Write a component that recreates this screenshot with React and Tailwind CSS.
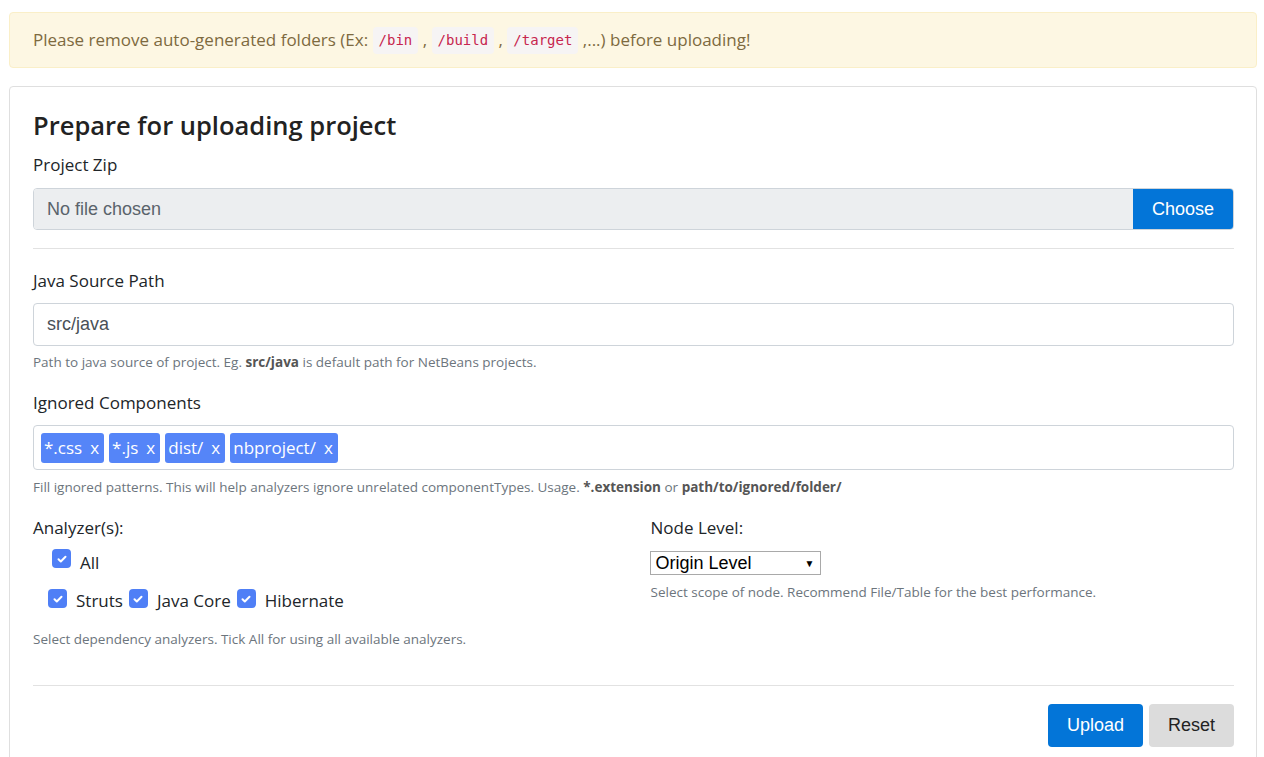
const tags = ['*.css', '*.js', 'dist/', 'nbproject/'];

const Check = () => (
    <span className="inline-flex h-[19px] w-[19px] items-center justify-center rounded-[4px] bg-[#4f7ff6]">
        <svg width="12" height="12" viewBox="0 0 12 12" fill="none">
            <path d="M2.5 6.3l2.3 2.2 4.7-4.7" stroke="white" strokeWidth="2" strokeLinecap="round" strokeLinejoin="round" />
        </svg>
    </span>
);

const Code = ({ children }) => (
    <code className="rounded-[4px] bg-[#f6f4f4] px-[6px] py-[3px] text-[14px] text-[#c7254e]" style={{ fontFamily: '"DejaVu Sans Mono", monospace' }}>
        {children}
    </code>
);

export default function App() {
    return (
        <div className="min-h-screen bg-white pt-[12px] pr-[7px] pl-[9px] text-[#212529]" style={{ fontFamily: '"Open Sans", "Noto Sans", sans-serif' }}>
            <div className="flex h-[56px] items-center rounded-[4px] border border-[#faefc8] bg-[#fdf7e3] px-[23px] text-[17px] text-[#7d6a3f]">
                <span>Please remove auto-generated folders (Ex:&nbsp;</span>
                <Code>/bin</Code>
                <span>&nbsp;,&nbsp;</span>
                <Code>/build</Code>
                <span>&nbsp;,&nbsp;</span>
                <Code>/target</Code>
                <span>&nbsp;,...) before uploading!</span>
            </div>

            <div className="mt-[18px] rounded-t-[4px] border border-[#dfdfdf] pt-[20px] pr-[22px] pb-[10px] pl-[23px]">
                <h3 className="text-[25.5px] font-semibold leading-[36px] text-[#222]">Prepare for uploading project</h3>
                <div className="mt-[10px] text-[17px] leading-[24px]">Project Zip</div>
                <div className="mt-[11px] flex h-[42px] overflow-hidden rounded-[4px] border border-[#ced4da]" style={{ fontFamily: '"Liberation Sans", Arial, sans-serif' }}>
                    <div className="flex flex-1 items-center bg-[#eceef0] px-[13px] text-[18px] text-[#5a636b]">No file chosen</div>
                    <div className="flex w-[100px] items-center justify-center bg-[#0375d8] text-[18px] text-white">Choose</div>
                </div>
                <div className="mt-[18px] border-t border-[#e2e2e2]" />

                <div className="mt-[20px] text-[17px] leading-[24px]">Java Source Path</div>
                <div className="mt-[10px] flex h-[43px] items-center rounded-[4px] border border-[#ced4da] px-[13px] text-[18px] text-[#495057]" style={{ fontFamily: '"Liberation Sans", Arial, sans-serif' }}>
                    src/java
                </div>
                <div className="mt-[6px] text-[13.5px] leading-[20px] text-[#6c757d]">
                    Path to java source of project. Eg. <b className="text-[#555]">src/java</b> is default path for NetBeans projects.
                </div>

                <div className="mt-[19px] text-[17px] leading-[24px]">Ignored Components</div>
                <div className="mt-[10px] flex h-[45px] items-center gap-[5px] rounded-[4px] border border-[#ced4da] px-[7px]">
                    {tags.map((t) => (
                        <span key={t} className="flex h-[30px] items-center gap-[8px] rounded-[3px] bg-[#5585f8] pr-[5px] pl-[3px] text-[17px] text-white">
                            <span>{t}</span>
                            <span>x</span>
                        </span>
                    ))}
                </div>
                <div className="mt-[7px] text-[13.5px] leading-[20px] text-[#6c757d]">
                    Fill ignored patterns. This will help analyzers ignore unrelated componentTypes. Usage. <b className="text-[#555]">*.extension</b> or <b className="text-[#555]">path/to/ignored/folder/</b>
                </div>

                <div className="mt-[19px] grid grid-cols-2 gap-[34px]">
                    <div>
                        <div className="text-[17px] leading-[24px]">Analyzer(s):</div>
                        <div className="mt-[10px] flex items-center pl-[19px]">
                            <span className="-mt-[8px]"><Check /></span>
                            <span className="ml-[9px] text-[17px]">All</span>
                        </div>
                        <div className="mt-[12px] flex items-center pl-[15px] text-[17px]">
                            <span className="-mt-[4px]"><Check /></span>
                            <span className="ml-[9px]">Struts</span>
                            <span className="-mt-[4px] ml-[6px]"><Check /></span>
                            <span className="ml-[9px]">Java Core</span>
                            <span className="-mt-[4px] ml-[6px]"><Check /></span>
                            <span className="ml-[9px]">Hibernate</span>
                        </div>
                        <div className="mt-[16px] text-[13.5px] leading-[20px] text-[#6c757d]">Select dependency analyzers. Tick All for using all available analyzers.</div>
                    </div>
                    <div>
                        <div className="text-[17px] leading-[24px]">Node Level:</div>
                        <div className="-ml-[1px] mt-[11px] flex h-[24px] w-[171px] items-center justify-between border border-[#a9a9a9] px-[5px] text-[18px] text-black" style={{ fontFamily: '"Liberation Sans", Arial, sans-serif' }}>
                            <span>Origin Level</span>
                            <span className="text-[10px]">▼</span>
                        </div>
                        <div className="mt-[7px] text-[13.5px] leading-[20px] text-[#6c757d]">Select scope of node. Recommend File/Table for the best performance.</div>
                    </div>
                </div>

                <div className="mt-[36px] border-t border-[#e2e2e2]" />
                <div className="mt-[18px] flex justify-end gap-[6px]" style={{ fontFamily: '"Liberation Sans", Arial, sans-serif' }}>
                    <button className="h-[43px] w-[95px] rounded-[4px] bg-[#0375d8] text-[18px] text-white">Upload</button>
                    <button className="h-[43px] w-[85px] rounded-[4px] bg-[#dcdcdc] text-[18px] text-[#222]">Reset</button>
                </div>
            </div>
        </div>
    );
}
